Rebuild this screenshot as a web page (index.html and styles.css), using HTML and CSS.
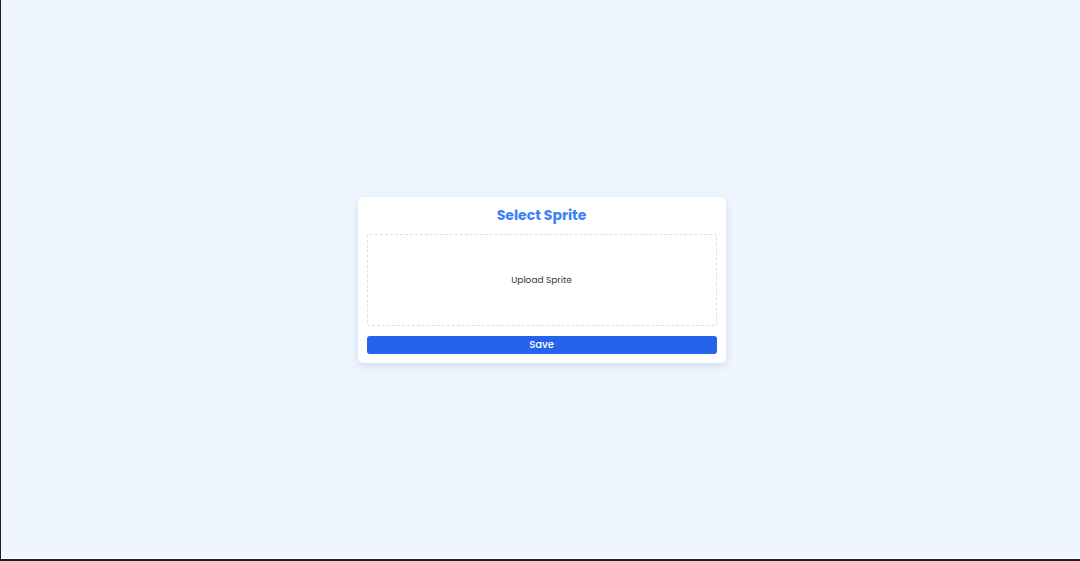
FILE: index.html
```html
<!DOCTYPE html>
<html lang="en">
<head>
  <meta charset="UTF-8" />
  <meta name="viewport" content="width=device-width, initial-scale=1.0"/>
  <title>Select Sprite</title>
  <link rel="stylesheet" href="styles.css">
</head>
<body>
  <div class="frame">
    <div class="stage">
      <div class="card">
        <h2>Select Sprite</h2>
        <label class="drop">
          <span>Upload Sprite</span>
          <input type="file" accept="image/*">
        </label>
        <button type="button">Save</button>
      </div>
    </div>
  </div>
</body>
</html>
```

FILE: styles.css
```css
html, body {
  margin: 0;
  height: 100%;
}
body {
  font-family: "Poppins", "Open Sans", sans-serif;
  background: #1e1e1e;
}
.frame {
  box-sizing: border-box;
  height: 100%;
  padding: 0 0 2px 1px;
}
.stage {
  box-sizing: border-box;
  height: 100%;
  padding: 2px 0 0 2px;
  background: #eff6ff;
  border-bottom: 1px solid #ffffff;
  display: flex;
  justify-content: center;
  align-items: center;
}
.card {
  width: 368px;
  box-sizing: border-box;
  background: white;
  padding: 8px 9px 9px;
  border-radius: 5px;
  box-shadow: 0 3px 8px rgba(30, 60, 110, 0.14);
}
h2 {
  margin: 0 0 9px;
  text-align: center;
  font-size: 14px;
  line-height: 20px;
  font-weight: 700;
  color: #3b82f6;
}
.drop {
  display: flex;
  justify-content: center;
  align-items: center;
  height: 92px;
  box-sizing: border-box;
  border: 1px dashed #d3e2ee;
  border-radius: 3px;
  font-size: 9px;
  color: #3a3a3a;
  cursor: pointer;
}
.drop input {
  display: none;
}
button {
  display: block;
  width: 100%;
  height: 18px;
  margin-top: 10px;
  padding: 0;
  border: none;
  border-radius: 3px;
  background: #2563eb;
  color: white;
  font-family: inherit;
  font-size: 10px;
  font-weight: 500;
  cursor: pointer;
}
button:hover {
  background: #1d4ed8;
}
```
